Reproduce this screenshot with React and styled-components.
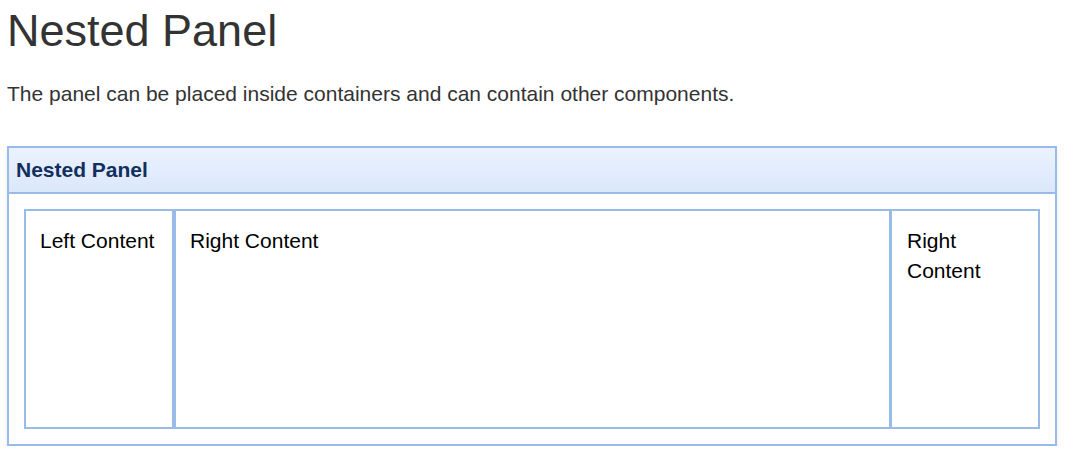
import React from "react";
import styled, { createGlobalStyle } from "styled-components";

const GlobalStyle = createGlobalStyle`
  html, body {
    margin: 0;
    padding: 0;
    background: #ffffff;
  }
  body {
    font-family: "Liberation Sans", Arial, Helvetica, sans-serif;
  }
`;

const Page = styled.div`
  padding: 0 26px 0 7px;
`;

const Title = styled.h1`
  margin: 5px 0 0 0;
  font-size: 45px;
  font-weight: 400;
  line-height: normal;
  color: #333333;
`;

const Description = styled.p`
  margin: 22px 0 0 0;
  font-size: 21px;
  line-height: 30px;
  color: #333333;
`;

const Panel = styled.section`
  margin-top: 37px;
  border: 2px solid #99bbe8;
  box-shadow: 0 3px 6px rgba(0, 0, 0, 0.08);
  background: #ffffff;
`;

const PanelHeader = styled.header`
  height: 44px;
  display: flex;
  align-items: center;
  padding: 0 7px;
  background: linear-gradient(to bottom, #ebf2fd, #dbe7fb);
  border-bottom: 2px solid #99bbe8;
  font-size: 21px;
  font-weight: 700;
  color: #11305e;
`;

const PanelBody = styled.div`
  padding: 15px;
`;

const Columns = styled.div`
  display: flex;
  height: 220px;
  box-sizing: border-box;
  border: 2px solid #99bbe8;
`;

const Column = styled.div`
  box-sizing: border-box;
  padding: 15px 12px 15px ${({ $inset }) => $inset || 14}px;
  font-size: 21px;
  line-height: 30px;
  color: #000000;
  ${({ $width }) => ($width ? `width: ${$width}px; flex: none;` : "flex: 1;")}
  border-left: ${({ $left }) => $left || 0}px solid #99bbe8;
  border-right: ${({ $right }) => $right || 0}px solid #99bbe8;
`;

export default function App() {
  return (
    <>
      <GlobalStyle />
      <Page>
        <Title>Nested Panel</Title>
        <Description>
          The panel can be placed inside containers and can contain other components.
        </Description>
        <Panel>
          <PanelHeader>Nested Panel</PanelHeader>
          <PanelBody>
            <Columns>
              <Column $width={148} $right={2}>Left Content</Column>
              <Column $left={2} $right={2}>Right Content</Column>
              <Column $width={147} $left={1} $inset={15}>Right Content</Column>
            </Columns>
          </PanelBody>
        </Panel>
      </Page>
    </>
  );
}
